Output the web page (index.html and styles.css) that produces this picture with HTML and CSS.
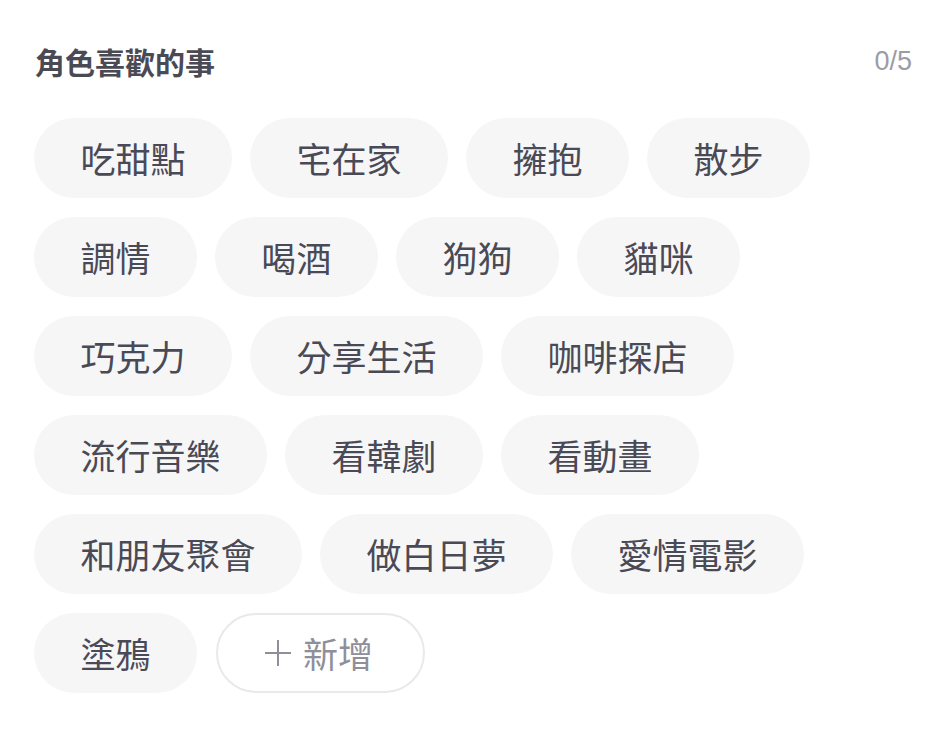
FILE: index.html
```html
<!DOCTYPE html>
<html lang="zh-Hant">
<head>
<meta charset="utf-8">
<link rel="stylesheet" href="styles.css">
</head>
<body>
<div class="page">
  <div class="header">
    <h2 class="title">角色喜歡的事</h2>
    <span class="count">0/5</span>
  </div>
  <div class="tags">
    <span class="tag">吃甜點</span>
    <span class="tag">宅在家</span>
    <span class="tag">擁抱</span>
    <span class="tag">散步</span>
    <span class="tag">調情</span>
    <span class="tag">喝酒</span>
    <span class="tag">狗狗</span>
    <span class="tag">貓咪</span>
    <span class="tag">巧克力</span>
    <span class="tag">分享生活</span>
    <span class="tag">咖啡探店</span>
    <span class="tag">流行音樂</span>
    <span class="tag">看韓劇</span>
    <span class="tag">看動畫</span>
    <span class="tag">和朋友聚會</span>
    <span class="tag">做白日夢</span>
    <span class="tag">愛情電影</span>
    <span class="tag">塗鴉</span>
    <span class="tag add"><svg class="plus" viewBox="0 0 28 28" width="28" height="28"><path d="M14 1V27M1 14H27" stroke="currentColor" stroke-width="2" fill="none"/></svg>新增</span>
  </div>
</div>
</body>
</html>
```
FILE: styles.css
```css
html, body {
  margin: 0;
  padding: 0;
  background: #ffffff;
}
body {
  font-family: "Noto Sans CJK TC", "Noto Sans", sans-serif;
}
.page {
  padding: 40px 36px 0 34px;
}
.header {
  height: 42px;
  display: flex;
  justify-content: space-between;
  align-items: center;
  margin-bottom: 36px;
}
.title {
  margin: 0 0 0 1px;
  font-size: 30px;
  font-weight: 700;
  color: #4a4a54;
  line-height: 42px;
}
.count {
  font-family: "Liberation Sans", "Noto Sans", sans-serif;
  font-size: 27px;
  color: #9c9ca7;
  line-height: 42px;
}
.tags {
  display: flex;
  flex-wrap: wrap;
  column-gap: 18px;
  row-gap: 19px;
  max-width: 800px;
}
.tag {
  box-sizing: border-box;
  height: 80px;
  padding: 0 46.5px;
  border-radius: 40px;
  background: #f6f6f7;
  color: #4a4a56;
  font-size: 35px;
  line-height: 80px;
  display: inline-flex;
  align-items: center;
  white-space: nowrap;
}
.tag.add {
  background: #ffffff;
  border: 2px solid #e9e9ed;
  color: #8f8f9b;
  padding: 0 50px 0 46px;
  margin-left: 1px;
}
.plus {
  margin-right: 11px;
  color: #8f8f9b;
}
```
